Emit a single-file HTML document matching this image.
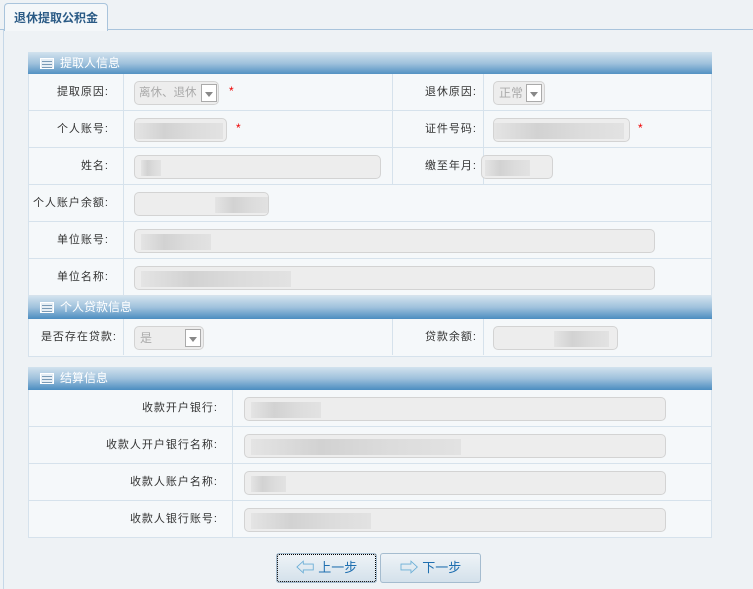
<!DOCTYPE html><html><head><meta charset="utf-8"><style>
*{margin:0;padding:0;box-sizing:border-box}
body{width:753px;height:589px;background:#eef2f5;font-family:"Liberation Sans","Noto Sans CJK SC",sans-serif;font-size:11px;color:#333;position:relative;overflow:hidden}
.a{position:absolute}
.tab{left:4px;top:3px;width:104px;height:28px;border:1px solid #a9c4dc;border-bottom:none;border-radius:4px 4px 0 0;background:#f4f7f9;color:#2a5a85;font-weight:bold;font-size:12px;line-height:28px;text-align:center}
.hd{left:28px;width:684px;height:23px;background:linear-gradient(#d2e2ee,#9fc1dc 50%,#4b8dc0);color:#fff;font-size:12px;line-height:23px;padding-left:32px}
.hd i{position:absolute;left:12px;top:6px;width:14px;height:11px;border:1px solid #fff;background:#e6eef5}
.hd i:before{content:"";position:absolute;left:1px;top:2px;width:10px;height:1px;background:#7a9ab5;box-shadow:0 3px 0 #7a9ab5,0 6px 0 #7a9ab5}
.row{left:28px;width:684px;height:37px;background:#f5f8fa;border-bottom:1px solid #d6e2ec;border-left:1px solid #d6e2ec;border-right:1px solid #d6e2ec}
.lb{position:absolute;top:0;height:36px;line-height:36px;text-align:right;border-right:1px solid #d6e2ec;letter-spacing:1px}
.in{position:absolute;height:24px;border:1px solid #d3d3d3;border-radius:5px;background:#ededed;color:#aaa;font-size:12px;line-height:22px;padding-left:5px;overflow:hidden;white-space:nowrap}
.bl{position:absolute;top:4px;height:16px;background:linear-gradient(90deg,#e4e4e4,#d2d2d2,#dcdcdc,#e2e2e2)}
.dd{position:absolute;right:2px;top:2px;width:16px;height:18px;border:1px solid #aaa;background:#fff}
.dd:after{content:"";position:absolute;left:3px;top:7px;border:4px solid transparent;border-top:5px solid #888}
.st{position:absolute;color:#e00;font-size:12px}
.btn{top:553px;width:101px;height:30px;border:1px solid #a5bccf;border-radius:3px;background:linear-gradient(#eef3f7,#d4e1eb);color:#1f6fb0;font-size:13px;line-height:28px;text-align:center}
.btn b{color:#6aaed6;font-size:19px;vertical-align:-2px}
</style></head><body>
<div class="a" style="left:0;top:29px;width:753px;height:1px;background:#a9c4dc"></div>
<div class="a" style="left:3px;top:30px;width:1px;height:559px;background:#c6d8e8"></div>
<div class="a tab">退休提取公积金</div>

<div class="a hd" style="top:52px"><i></i>提取人信息</div>
<div class="a row" style="top:74px"><div class="lb" style="left:0;width:95px;padding-right:14px">提取原因:</div><div class="lb" style="left:363px;width:92px;padding-right:6px;border-left:1px solid #d6e2ec">退休原因:</div>
<div class="in" style="left:105px;top:7px;width:85px;font-size:11.5px;padding-left:4px">离休、退休<div class="dd" style="right:1px"></div></div><span class="st" style="left:200px;top:10px">*</span>
<div class="in" style="left:464px;top:7px;width:52px">正常<div class="dd"></div></div></div>
<div class="a row" style="top:111px"><div class="lb" style="left:0;width:95px;padding-right:14px">个人账号:</div><div class="lb" style="left:363px;width:92px;padding-right:6px;border-left:1px solid #d6e2ec">证件号码:</div>
<div class="in" style="left:105px;top:7px;width:93px"><div class="bl" style="left:0;width:88px"></div></div><span class="st" style="left:207px;top:10px">*</span>
<div class="in" style="left:464px;top:7px;width:137px"><div class="bl" style="left:0;width:130px"></div></div><span class="st" style="left:609px;top:10px">*</span></div>
<div class="a row" style="top:148px"><div class="lb" style="left:0;width:95px;padding-right:14px">姓名:</div><div class="lb" style="left:363px;width:92px;padding-right:6px;border-left:1px solid #d6e2ec">缴至年月:</div>
<div class="in" style="left:105px;top:7px;width:247px"><div class="bl" style="left:6px;width:20px"></div></div>
<div class="in" style="left:452px;top:7px;width:72px"><div class="bl" style="left:3px;width:45px"></div></div></div>
<div class="a row" style="top:185px"><div class="lb" style="left:0;width:95px;padding-right:14px">个人账户余额:</div>
<div class="in" style="left:105px;top:7px;width:135px"><div class="bl" style="left:80px;width:55px"></div></div></div>
<div class="a row" style="top:222px"><div class="lb" style="left:0;width:95px;padding-right:14px">单位账号:</div>
<div class="in" style="left:105px;top:7px;width:521px"><div class="bl" style="left:6px;width:70px"></div></div></div>
<div class="a row" style="top:259px"><div class="lb" style="left:0;width:95px;padding-right:14px">单位名称:</div>
<div class="in" style="left:105px;top:7px;width:521px"><div class="bl" style="left:6px;width:150px"></div></div></div>

<div class="a hd" style="top:296px"><i></i>个人贷款信息</div>
<div class="a row" style="top:319px;height:38px"><div class="lb" style="left:0;width:95px;padding-right:6px">是否存在贷款:</div><div class="lb" style="left:363px;width:92px;padding-right:6px;border-left:1px solid #d6e2ec">贷款余额:</div>
<div class="in" style="left:105px;top:7px;width:70px">是<div class="dd"></div></div>
<div class="in" style="left:464px;top:7px;width:125px"><div class="bl" style="left:60px;width:55px"></div></div></div>

<div class="a hd" style="top:367px"><i></i>结算信息</div>
<div class="a row" style="top:390px"><div class="lb" style="left:0;width:204px;padding-right:14px">收款开户银行:</div><div class="in" style="left:215px;top:7px;width:422px"><div class="bl" style="left:6px;width:70px"></div></div></div>
<div class="a row" style="top:427px"><div class="lb" style="left:0;width:204px;padding-right:14px">收款人开户银行名称:</div><div class="in" style="left:215px;top:7px;width:422px"><div class="bl" style="left:6px;width:210px"></div></div></div>
<div class="a row" style="top:464px"><div class="lb" style="left:0;width:204px;padding-right:14px">收款人账户名称:</div><div class="in" style="left:215px;top:7px;width:422px"><div class="bl" style="left:6px;width:35px"></div></div></div>
<div class="a row" style="top:501px"><div class="lb" style="left:0;width:204px;padding-right:14px">收款人银行账号:</div><div class="in" style="left:215px;top:7px;width:422px"><div class="bl" style="left:6px;width:120px"></div></div></div>

<div class="a btn" style="left:276px;outline:1px dotted #000;outline-offset:-2px"><b>⇦</b> 上一步</div>
<div class="a btn" style="left:380px"><b>⇨</b> 下一步</div>
</body></html>
